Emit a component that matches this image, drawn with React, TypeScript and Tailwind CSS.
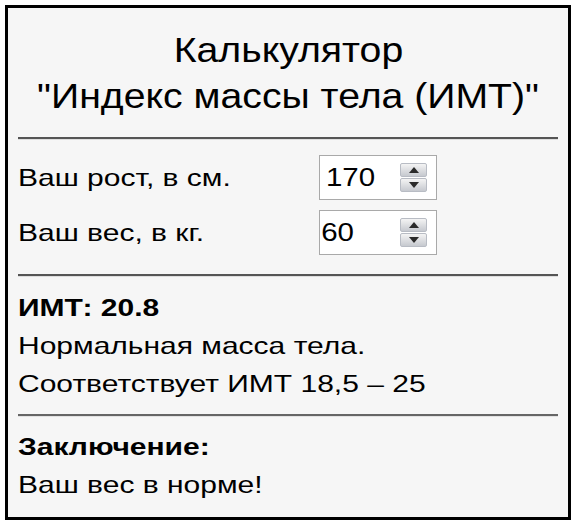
import React from "react";

// the reference text is drawn wide, so each line is stretched horizontally
function Wide({ children, className = "" }: { children: React.ReactNode; className?: string }) {
  return <span className={`inline-block origin-left scale-x-125 whitespace-nowrap ${className}`}>{children}</span>;
}

function Spinner() {
  return (
    <div className="flex w-[27px] flex-col gap-[1px]">
      <div className="flex h-[14px] items-center justify-center rounded-[2px] border border-[#b8bcc4] bg-gradient-to-b from-[#f4f4f4] to-[#c6c9cf]">
        <svg width="10" height="6" viewBox="0 0 10 6">
          <path d="M0 6 L5 0 L10 6 Z" fill="#2a2a2a" />
        </svg>
      </div>
      <div className="flex h-[14px] items-center justify-center rounded-[2px] border border-[#b8bcc4] bg-gradient-to-b from-[#f4f4f4] to-[#c6c9cf]">
        <svg width="10" height="6" viewBox="0 0 10 6">
          <path d="M0 0 L10 0 L5 6 Z" fill="#2a2a2a" />
        </svg>
      </div>
    </div>
  );
}

function NumberField({ value, pad }: { value: string; pad: string }) {
  return (
    <div className="flex h-[45px] w-[118px] items-center justify-between border border-[#a9a9a9] bg-white pr-[9px]">
      <span className={`${pad} inline-block origin-left scale-x-[1.18] text-[25px] text-black`}>{value}</span>
      <Spinner />
    </div>
  );
}

function Rule() {
  return <div className="border-t-2 border-b border-t-[#555] border-b-[#ddd]" />;
}

export default function App() {
  return (
    <div
      className="h-[525px] w-[576px] bg-white p-[5px]"
      style={{ fontFamily: '"Liberation Sans", Arial, sans-serif' }}
    >
      <div className="flex h-[515px] flex-col border-[3px] border-black bg-[#f6f6f6] px-[10px]">
        <h1 className="flex flex-col items-center pt-[19px] pb-[18px] text-[35px] leading-[46px] text-black">
          <span className="inline-block scale-x-[1.12] whitespace-nowrap">Калькулятор</span>
          <span className="inline-block scale-x-[1.12] whitespace-nowrap">"Индекс массы тела (ИМТ)"</span>
        </h1>
        <Rule />
        <div className="flex flex-col gap-[10px] pt-[15px] pb-[19px] text-[24px] text-black">
          <div className="flex items-center">
            <div className="w-[301px]">
              <Wide>Ваш рост, в см.</Wide>
            </div>
            <NumberField value="170" pad="pl-[5px]" />
          </div>
          <div className="flex items-center">
            <div className="w-[301px]">
              <Wide>Ваш вес, в кг.</Wide>
            </div>
            <NumberField value="60" pad="pl-[1px]" />
          </div>
        </div>
        <Rule />
        <div className="flex flex-col items-start pt-[12px] pb-[11px] text-[24px] leading-[38px] text-black">
          <Wide className="font-bold">ИМТ: 20.8</Wide>
          <Wide>Нормальная масса тела.</Wide>
          <Wide>Соответствует ИМТ 18,5 – 25</Wide>
        </div>
        <div className="border-t-2 border-b border-t-[#666] border-b-[#e2e2e2]" />
        <div className="flex flex-col items-start pt-[11px] text-[24px] leading-[38px] text-black">
          <Wide className="font-bold">Заключение:</Wide>
          <Wide>Ваш вес в норме!</Wide>
        </div>
      </div>
    </div>
  );
}
